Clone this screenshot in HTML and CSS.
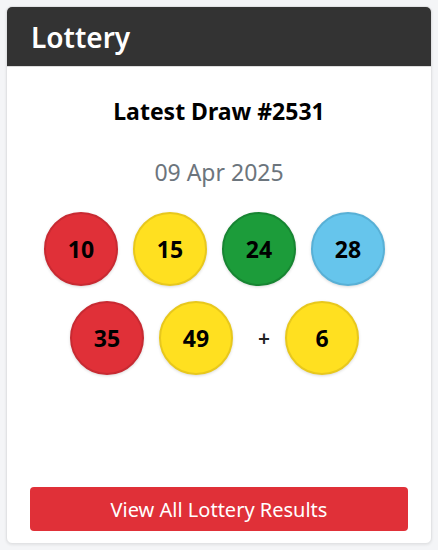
FILE: index.html
```html
<!DOCTYPE html>
<html>
<head>
<meta charset="utf-8">
<link rel="stylesheet" href="styles.css">
</head>
<body>
<div class="card">
  <div class="card-header"><h2 class="title">Lottery</h2></div>
  <div class="card-body">
    <h3 class="draw">Latest Draw #2531</h3>
    <div class="date">09 Apr 2025</div>
    <div class="balls">
      <span class="ball red">10</span>
      <span class="ball yellow">15</span>
      <span class="ball green">24</span>
      <span class="ball blue">28</span>
      <span class="ball red">35</span>
      <span class="ball yellow">49</span>
      <span class="plus">+</span>
      <span class="ball yellow">6</span>
    </div>
    <a class="btn" href="#">View All Lottery Results</a>
  </div>
</div>
</body>
</html>
```
FILE: styles.css
```css
html, body { margin: 0; padding: 0; }
body {
  background: #f4f5f7;
  font-family: "Noto Sans", "Open Sans", sans-serif;
  padding: 6px;
  box-sizing: border-box;
  height: 550px;
}
.card {
  background: #fff;
  border: 1px solid #e2e3e5;
  border-radius: 6px;
  overflow: hidden;
  height: 538px;
  box-sizing: border-box;
  display: flex;
  flex-direction: column;
  box-shadow: 0 1px 3px rgba(0,0,0,0.08);
}
.card-header {
  background: #333333;
  height: 60px;
  display: flex;
  align-items: center;
  padding: 0 24px;
  border-bottom: 1px solid #dcdcdc;
  box-sizing: border-box;
}
.title {
  margin: 0;
  color: #fff;
  font-size: 28px;
  font-weight: 600;
  line-height: 1;
}
.card-body {
  flex: 1;
  display: flex;
  flex-direction: column;
  align-items: center;
  padding: 30px 23px 12px 23px;
}
.draw {
  margin: 0;
  font-size: 23px;
  font-weight: 700;
  color: #000;
  line-height: 28px;
}
.date {
  margin-top: 33px;
  font-size: 23px;
  color: #6c757d;
  line-height: 28px;
}
.balls {
  margin-top: 26px;
  width: 341px;
  display: flex;
  flex-wrap: wrap;
  justify-content: center;
  align-items: center;
  gap: 15px;
  margin-right: 9px;
}
.ball {
  width: 74px;
  height: 74px;
  border-radius: 50%;
  box-sizing: border-box;
  border: 2px solid;
  display: flex;
  align-items: center;
  justify-content: center;
  font-size: 23px;
  font-weight: 700;
  color: #000;
  box-shadow: 0 1px 3px rgba(0,0,0,0.15);
}
.red { background: #e03038; border-color: #c82a32; }
.yellow { background: #ffe020; border-color: #e8c81c; }
.green { background: #1c9c3a; border-color: #178532; }
.blue { background: #66c5ec; border-color: #58b0d6; }
.plus {
  font-size: 21px;
  font-weight: 600;
  color: #222;
  margin-left: 10px;
  width: 12px;
  text-align: center;
}
.btn {
  margin-top: auto;
  align-self: stretch;
  height: 44px;
  background: #e03038;
  color: #fff;
  border-radius: 4px;
  display: flex;
  align-items: center;
  justify-content: center;
  text-decoration: none;
  font-size: 20px;
}
```
